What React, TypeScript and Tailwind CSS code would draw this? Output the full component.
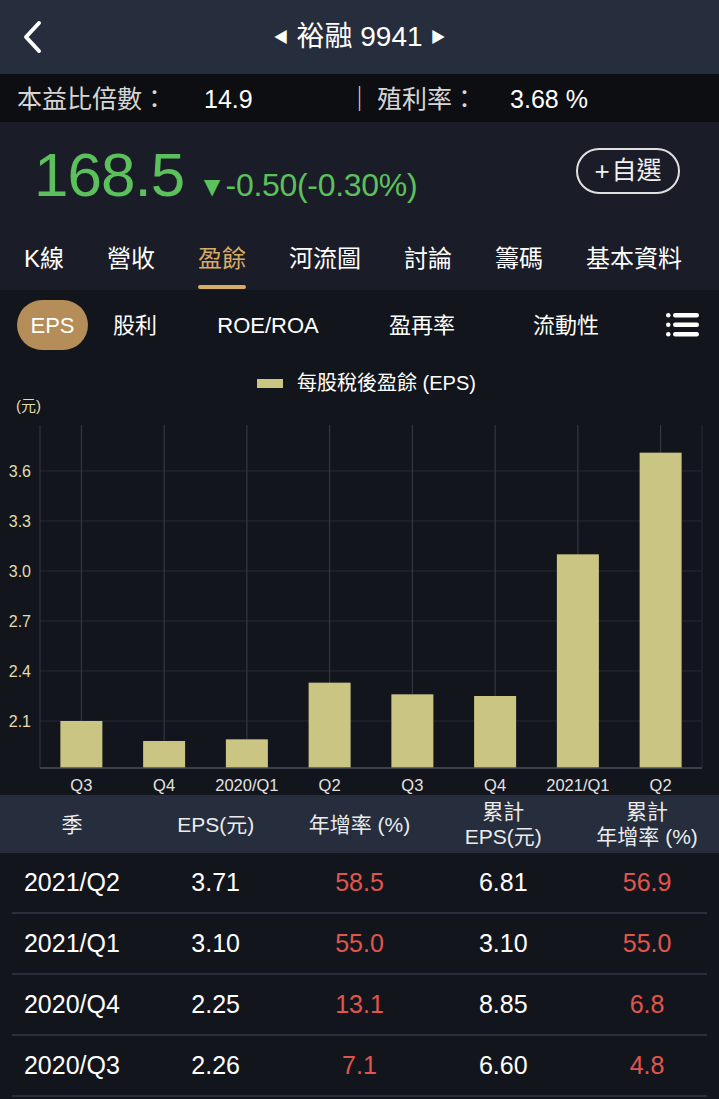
import React from 'react';

const FONT = { fontFamily: '"Liberation Sans", "Noto Sans CJK TC", sans-serif' };

const mainTabs = ['K線', '營收', '盈餘', '河流圖', '討論', '籌碼', '基本資料'];

const bars = [
  { label: 'Q3', v: 2.1 },
  { label: 'Q4', v: 1.98 },
  { label: '2020/Q1', v: 1.99 },
  { label: 'Q2', v: 2.33 },
  { label: 'Q3', v: 2.26 },
  { label: 'Q4', v: 2.25 },
  { label: '2021/Q1', v: 3.1 },
  { label: 'Q2', v: 3.71 },
];

const rows = [
  ['2021/Q2', '3.71', '58.5', '6.81', '56.9'],
  ['2021/Q1', '3.10', '55.0', '3.10', '55.0'],
  ['2020/Q4', '2.25', '13.1', '8.85', '6.8'],
  ['2020/Q3', '2.26', '7.1', '6.60', '4.8'],
];

// chart geometry (svg coords)
const X0 = 40;
const X1 = 702;
const TOP = 8;
const BOTTOM = 351;
const yOf = (v: number) => 304 - (v - 2.1) * 166.67;
const step = (X1 - X0) / bars.length;

function EpsChart() {
  const ticks = [3.6, 3.3, 3.0, 2.7, 2.4, 2.1];
  return (
    <svg width="719" height="378" viewBox="0 0 719 378" className="block">
      {ticks.map((t) => (
        <g key={t}>
          <line x1={X0} x2={X1} y1={yOf(t)} y2={yOf(t)} stroke="#272b35" strokeWidth="1" />
          <text x="31" y={yOf(t) + 6} textAnchor="end" fontSize="16" fill="#e4ddab" style={FONT}>
            {t.toFixed(1)}
          </text>
        </g>
      ))}
      {bars.map((b, i) => {
        const cx = X0 + step * i + step / 2;
        return (
          <line key={'v' + i} x1={cx} x2={cx} y1={TOP} y2={BOTTOM} stroke="#3a3e49" strokeWidth="1" />
        );
      })}
      <line x1={X0} x2={X0} y1={TOP} y2={BOTTOM} stroke="#353944" strokeWidth="1" />
      <line x1={X1} x2={X1} y1={TOP} y2={BOTTOM} stroke="#272b35" strokeWidth="1" />
      {bars.map((b, i) => {
        const cx = X0 + step * i + step / 2;
        const y = yOf(b.v);
        return (
          <g key={'b' + i}>
            <rect x={cx - 21} y={y} width="42" height={BOTTOM - y} fill="#cbc584" />
            <text x={cx} y="374" textAnchor="middle" fontSize="16.5" fill="#e2e2e2" style={FONT}>
              {b.label}
            </text>
          </g>
        );
      })}
      <line x1={X0} x2={X1} y1={BOTTOM} y2={BOTTOM} stroke="#4a4e58" strokeWidth="1.5" />
    </svg>
  );
}

export default function App() {
  return (
    <div className="w-[719px] h-[1099px] overflow-hidden bg-[#13151c] text-white" style={FONT}>
      {/* Header */}
      <div className="h-[74px] bg-[#262d3c] flex items-center relative">
        <svg width="24" height="36" viewBox="0 0 24 36" className="ml-[20px]">
          <path d="M19 4 L6 18 L19 32" fill="none" stroke="#fff" strokeWidth="4" strokeLinecap="round" strokeLinejoin="round" />
        </svg>
        <div className="absolute left-0 right-0 top-0 h-[74px] flex items-center justify-center gap-[8px] pointer-events-none">
          <span className="text-[15px] text-white">◀</span>
          <span className="text-[28px] text-white">裕融 9941</span>
          <span className="text-[15px] text-white">▶</span>
        </div>
      </div>

      {/* Stats bar */}
      <div className="h-[48px] bg-[#0d0e11] flex items-center pt-[3px] text-[25px]">
        <span className="ml-[17px] text-[#d6d6d6]">本益比倍數：</span>
        <span className="ml-[37px] w-[143px] text-white">14.9</span>
        <span className="text-[#d6d6d6]">｜</span>
        <span className="ml-[5px] text-[#d6d6d6]">殖利率：</span>
        <span className="ml-[33px] text-white">3.68 %</span>
      </div>

      {/* Price and main tabs */}
      <div className="bg-[#1a1d27]">
        <div className="h-[106px] flex items-center">
          <span className="ml-[34px] text-[62px] leading-none text-[#5cc05c] tracking-[-1px]">168.5</span>
          <span className="ml-[14px] mt-[20px] text-[32px] leading-none text-[#5cc05c] tracking-[-0.3px]">
            <span className="text-[28px]">▼</span>-0.50(-0.30%)
          </span>
          <div className="ml-auto mr-[39px] mt-[-8px] w-[104px] h-[46px] rounded-full border-2 border-[#e0e0e0] flex items-center justify-center text-[25px] text-[#f0f0f0]">
            <span className="text-[26px] mr-[2px] font-light">+</span>自選
          </div>
        </div>
        <div className="h-[62px] flex justify-between pl-[24px] pr-[37px]">
          {mainTabs.map((t) => (
            <div key={t} className="relative flex items-center text-[24px]">
              <span className={t === '盈餘' ? 'text-[#d8ab66]' : 'text-white'}>{t}</span>
              {t === '盈餘' && (
                <div className="absolute left-0 right-0 bottom-[1px] h-[4px] rounded-full bg-[#d8ab66]" />
              )}
            </div>
          ))}
        </div>
      </div>

      {/* Sub tabs */}
      <div className="h-[70px] flex items-center text-[22px] text-white">
        <div className="ml-[17px] w-[71px] h-[50px] rounded-full bg-[#b48d58] flex items-center justify-center">EPS</div>
        <div className="w-[94px] text-center">股利</div>
        <div className="w-[172px] text-center">ROE/ROA</div>
        <div className="w-[136px] text-center">盈再率</div>
        <div className="w-[152px] text-center">流動性</div>
        <svg width="33" height="26" viewBox="0 0 33 26" className="ml-[24px]">
          <rect x="0" y="1" width="4.5" height="4.5" rx="2.2" fill="#fff" />
          <rect x="0" y="10.5" width="4.5" height="4.5" rx="2.2" fill="#fff" />
          <rect x="0" y="20" width="4.5" height="4.5" rx="2.2" fill="#fff" />
          <rect x="7" y="1" width="26" height="4.5" rx="2.2" fill="#fff" />
          <rect x="7" y="10.5" width="26" height="4.5" rx="2.2" fill="#fff" />
          <rect x="7" y="20" width="26" height="4.5" rx="2.2" fill="#fff" />
        </svg>
      </div>

      {/* Legend */}
      <div className="h-[35px] flex items-end justify-center">
        <div className="flex items-center gap-[14px] h-[24px] ml-[14px]">
          <div className="w-[26px] h-[9px] bg-[#cbc584]" />
          <span className="text-[20px] text-white">每股稅後盈餘 (EPS)</span>
        </div>
      </div>
      <div className="h-[22px] flex items-center pl-[16px] text-[15px] text-[#e4ddab]">(元)</div>

      <EpsChart />

      {/* Table header */}
      <div className="h-[58px] bg-[#262d3c] grid grid-cols-5 items-center text-center text-[21px] leading-[25px] text-[#ececec]">
        <div>季</div>
        <div>EPS(元)</div>
        <div>年增率 (%)</div>
        <div>
          累計
          <br />
          EPS(元)
        </div>
        <div>
          累計
          <br />
          年增率 (%)
        </div>
      </div>

      {/* Table rows */}
      {rows.map((r) => (
        <div key={r[0]}>
          <div className="h-[59px] grid grid-cols-5 items-center text-center text-[25px]">
            <div className="text-white">{r[0]}</div>
            <div className="text-white">{r[1]}</div>
            <div className="text-[#e0564d]">{r[2]}</div>
            <div className="text-white">{r[3]}</div>
            <div className="text-[#e0564d]">{r[4]}</div>
          </div>
          <div className="mx-[12px] h-[2px] bg-[#2a2f3b]" />
        </div>
      ))}
    </div>
  );
}
